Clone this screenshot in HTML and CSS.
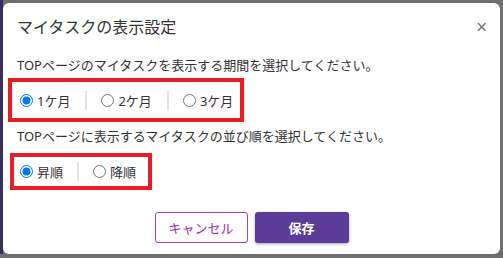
FILE: index.html
```html
<!DOCTYPE html>
<html lang="ja">
<head>
    <meta charset="UTF-8">
    <meta name="viewport" content="width=device-width, initial-scale=1.0">
    <title>マイタスクの表示設定</title>
    <link rel="stylesheet" href="styles.css">
</head>
<body>
    <div class="backdrop">
        <div class="modal">
            <div class="modal-header">
                <h2 class="modal-title">マイタスクの表示設定</h2>
                <span class="close">&times;</span>
            </div>

            <div class="modal-body">
                <p class="label">TOPページのマイタスクを表示する期間を選択してください。</p>
                <div class="choice-box period">
                    <label class="choice"><input type="radio" name="period" checked> 1ケ月</label>
                    <span class="sep"></span>
                    <label class="choice"><input type="radio" name="period"> 2ケ月</label>
                    <span class="sep"></span>
                    <label class="choice"><input type="radio" name="period"> 3ケ月</label>
                </div>

                <p class="label second">TOPページに表示するマイタスクの並び順を選択してください。</p>
                <div class="choice-box order">
                    <label class="choice"><input type="radio" name="order" checked> 昇順</label>
                    <span class="sep"></span>
                    <label class="choice"><input type="radio" name="order"> 降順</label>
                </div>
            </div>

            <div class="modal-footer">
                <button class="btn btn-cancel">キャンセル</button>
                <button class="btn btn-save">保存</button>
            </div>
        </div>
    </div>
</body>
</html>
```

FILE: styles.css
```css
* {
    margin: 0;
    padding: 0;
    box-sizing: border-box;
    font-family: 'Noto Sans', 'Noto Sans CJK JP', sans-serif;
}
body {
    background-color: #6f6f6f;
    color: #333;
    width: 503px;
    height: 258px;
    overflow: hidden;
}
.backdrop {
    padding: 3px 3px 0 0;
    border-left: 3px solid #3b2f57;
}
.modal {
    background-color: white;
    width: 497px;
    height: 251px;
    border-radius: 6px;
    display: flex;
    flex-direction: column;
}
.modal-header {
    display: flex;
    justify-content: space-between;
    align-items: center;
    padding: 14px 13px 18px 14px;
}
.modal-title {
    font-size: 16px;
    font-weight: 400;
    line-height: 20px;
    color: #333;
}
.close {
    color: #777;
    font-size: 19px;
    line-height: 20px;
}
.modal-body {
    padding: 0 14px 0 5px;
}
.label {
    font-size: 13px;
    line-height: 20px;
    padding-left: 9px;
    color: #333;
}
.label.second {
    margin-top: 4px;
}
.choice-box {
    display: inline-flex;
    align-items: center;
    border: 4px solid #ed1c24;
    font-size: 13px;
    color: #333;
}
.period {
    margin-top: 3px;
    height: 44px;
    width: 236px;
    padding-left: 8px;
}
.order {
    margin-top: 7px;
    margin-left: 2px;
    height: 37px;
    width: 142px;
    padding-left: 6px;
}
.choice {
    display: flex;
    align-items: center;
    gap: 4px;
}
.choice input {
    width: 13px;
    height: 13px;
    margin: 0;
    accent-color: #0075ff;
}
.sep {
    width: 2px;
    height: 19px;
    background-color: #e2e2e2;
    margin: 0 14px 0 15px;
}
.order .sep {
    margin: 0 14px;
}
.modal-footer {
    display: flex;
    justify-content: center;
    gap: 7px;
    margin-top: 22px;
}
.btn {
    height: 31px;
    font-size: 13px;
    border-radius: 3px;
    cursor: pointer;
}
.btn-cancel {
    width: 93px;
    background-color: white;
    color: #9c2fae;
    border: 1px solid #a543b5;
}
.btn-save {
    width: 94px;
    background-color: #5b3c98;
    color: white;
    font-weight: 700;
    border: none;
    box-shadow: 0 1px 3px rgba(0, 0, 0, 0.35);
}
```
